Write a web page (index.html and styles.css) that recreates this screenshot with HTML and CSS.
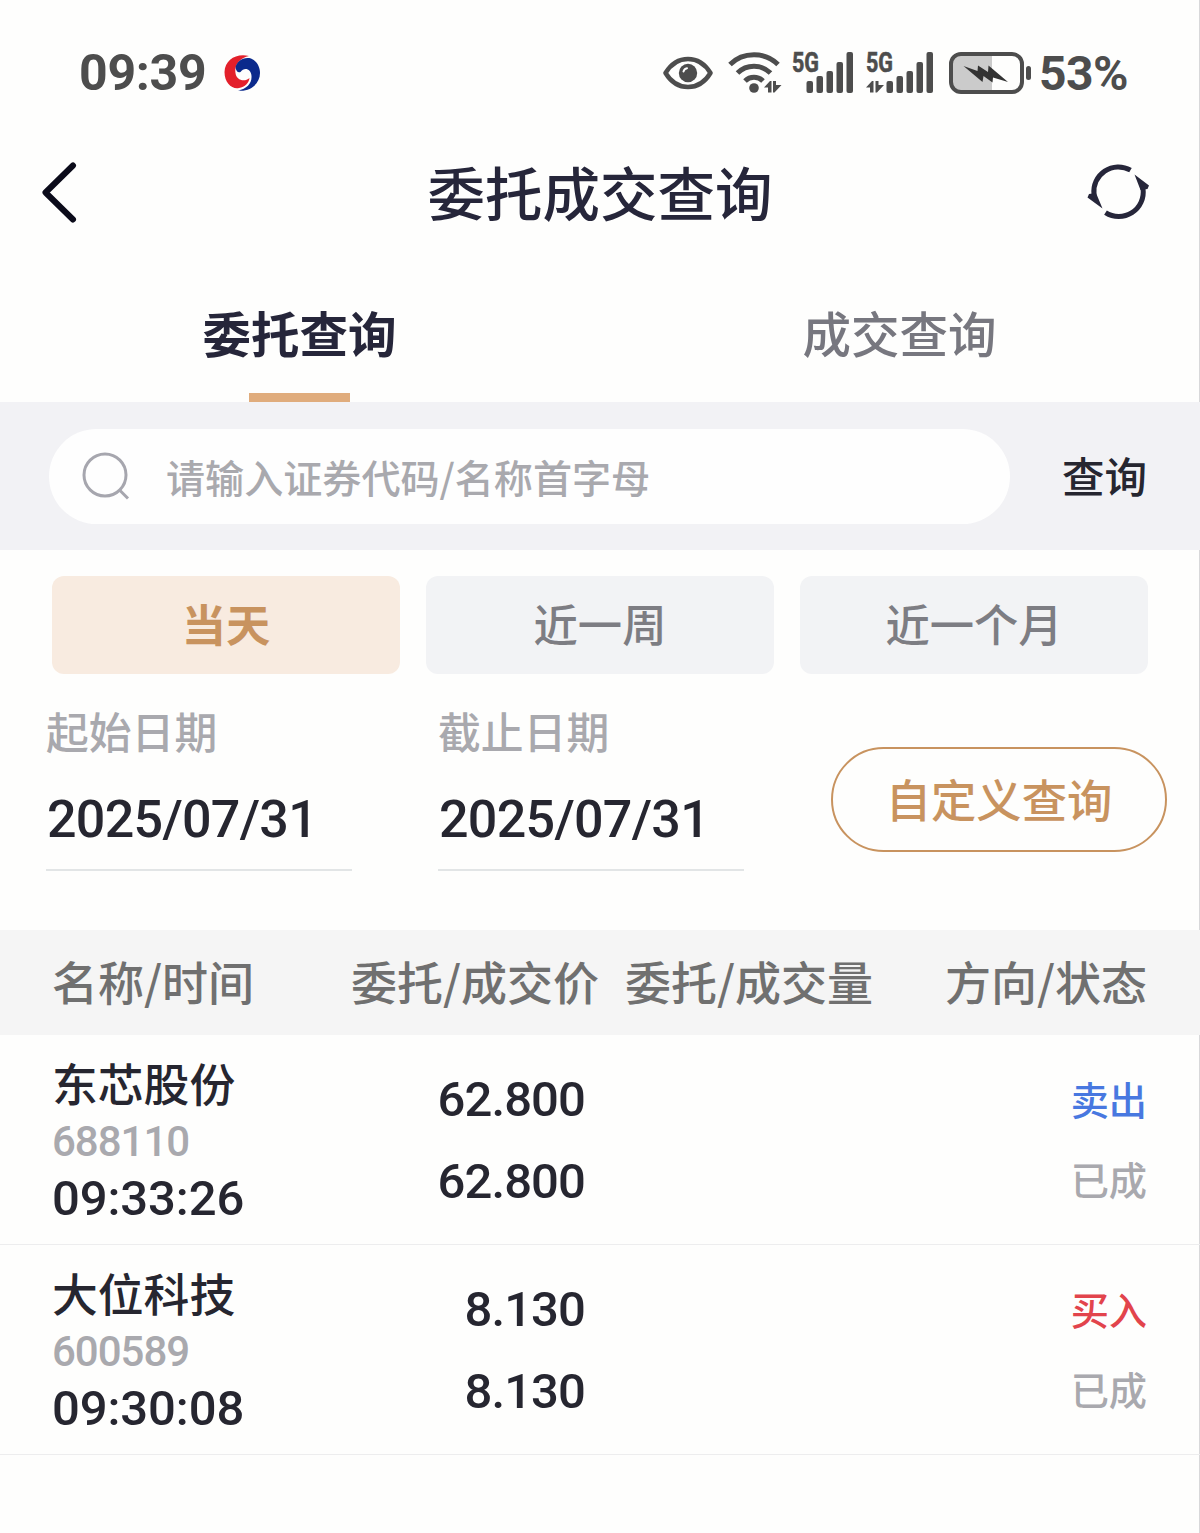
FILE: index.html
```html
<!DOCTYPE html>
<html lang="zh-CN">
<head>
    <meta charset="UTF-8">
    <meta name="viewport" content="width=device-width, initial-scale=1.0">
    <title>委托成交查询</title>
    <link rel="stylesheet" href="styles.css">
</head>
<body>
    <div class="status-bar">
        <span class="clock">09:39</span>
        <svg class="app-logo" width="38" height="38" viewBox="0 0 38 38">
            <path d="M26 2C13-1 2 6 1.500 18 1.500 29 9 35.500 16 34c6-1 10-5 10.500-10C21 29 13 25.500 12.500 19 11 11 17 4 26 2z" fill="#e3202b"/>
            <path d="M12.500 14C13 8 20 2.500 28 4.500c6 2.500 9 8.500 9 14.500C37 29 28 38 15 36.500 24 35 29 29 28.500 22 28 14.500 21 13 17.500 18c-2.500 1-4-.5-5-4z" fill="#0b2a8c"/>
        </svg>
        <div class="status-icons">
            <svg class="icon-eye" width="50" height="34" viewBox="0 0 50 34">
                <path d="M2.500 17C8 8 16 3 25 3s17 5 22.500 14C42 26 34 31 25 31S8 26 2.500 17z" fill="none" stroke="#4d4d4d" stroke-width="4.500" stroke-linejoin="round"/>
                <circle cx="25" cy="17" r="9.200" fill="#4d4d4d"/>
                <path d="M20.500 15.500a4.500 4.500 0 0 1 3.500-3.200" fill="none" stroke="#fff" stroke-width="2" stroke-linecap="round"/>
            </svg>
            <svg class="icon-wifi" width="54" height="44" viewBox="0 0 54 44">
                <g fill="none" stroke="#4d4d4d" stroke-width="5">
                    <path d="M2 13.500C15 .5 37 .5 50 13.500"/>
                    <path d="M9.500 22c9-9 24-9 33 0"/>
                    <path d="M17 30c5-5 13-5 18 0"/>
                </g>
                <circle cx="26" cy="37" r="4.800" fill="#4d4d4d"/>
                <path d="M36 36.500l6-6.500h1.500v11.500h-3.500v-5zM45 30h3v4h5.500L46.500 41.500H45z" fill="#4d4d4d"/>
            </svg>
            <svg class="icon-signal" width="62" height="60" viewBox="0 -8 62 60">
                <text class="net" x="0" y="20.500" textLength="27" lengthAdjust="spacingAndGlyphs">5G</text>
                <g fill="#4d4d4d">
                    <rect x="14.500" y="30" width="6.500" height="12" rx="2"/>
                    <rect x="24.500" y="25" width="6.500" height="17" rx="2"/>
                    <rect x="34.500" y="20" width="6.500" height="22" rx="2"/>
                    <rect x="44.500" y="11" width="6.500" height="31" rx="2"/>
                    <rect x="54.500" y="1" width="6.500" height="41" rx="2"/>
                </g>
            </svg>
            <svg class="icon-signal-data" width="68" height="60" viewBox="0 -8 68 60">
                <text class="net" x="0" y="20.500" textLength="27" lengthAdjust="spacingAndGlyphs">5G</text>
                <path d="M0 36.500L6 30h1.500v11.500H4v-5zM9.500 30h3v4h5.500L11 41.500H9.500z" fill="#4d4d4d"/>
                <g fill="#4d4d4d">
                    <rect x="20.500" y="30" width="6.500" height="12" rx="2"/>
                    <rect x="30.500" y="25" width="6.500" height="17" rx="2"/>
                    <rect x="40.500" y="20" width="6.500" height="22" rx="2"/>
                    <rect x="50.500" y="11" width="6.500" height="31" rx="2"/>
                    <rect x="60.500" y="1" width="6.500" height="41" rx="2"/>
                </g>
            </svg>
            <svg class="icon-battery" width="84" height="44" viewBox="0 0 84 44">
                <path d="M12 4h31v36H12a9 9 0 0 1-9-9V13a9 9 0 0 1 9-9z" fill="#cbcbcb"/>
                <rect x="2" y="3" width="71" height="38" rx="10" fill="none" stroke="#4d4d4d" stroke-width="4"/>
                <path d="M14.500 15l14 5 .5-5.500 10 6.500.5-6.500L59 31l-15-4.500-.5 5-9-6.500-1 6z" fill="#333"/>
                <rect x="77" y="15" width="5" height="14" rx="2.500" fill="#4d4d4d"/>
            </svg>
        </div>
        <span class="battery-level">53%</span>
    </div>

    <header class="nav">
        <svg class="back" width="36" height="62" viewBox="0 0 36 62">
            <path d="M32 3.500L4.500 30.500 32 57.500" fill="none" stroke="#0b0b1a" stroke-width="6" stroke-linecap="round" stroke-linejoin="round"/>
        </svg>
        <h1 class="title">委托成交查询</h1>
        <svg class="refresh" width="64" height="58" viewBox="0 0 64 58">
            <g fill="none" stroke="#26263a" stroke-width="5">
                <path d="M44.500 6.200A24.500 24.500 0 0 0 8 30.500V33"/>
                <path d="M19.500 48.600A24.500 24.500 0 0 0 57 24.500V22"/>
            </g>
            <path d="M48.500 10.500L63 21.500l-1.500 3.500-7 1zM16.500 44.500L1.500 33.500 3 30l7-1z" fill="#26263a"/>
        </svg>
    </header>

    <nav class="tabs">
        <div class="tab active">委托查询</div>
        <div class="tab">成交查询</div>
    </nav>

    <div class="search-bar">
        <div class="search-box">
            <svg width="48" height="48" viewBox="0 0 48 48">
                <g fill="none" stroke="#a6a6ae" stroke-width="3">
                    <circle cx="23" cy="23" r="21"/>
                    <path d="M37.500 38l8.500 8.500"/>
                </g>
            </svg>
            <span class="placeholder">请输入证券代码/名称首字母</span>
        </div>
        <div class="search-btn">查询</div>
    </div>

    <div class="ranges">
        <div class="range active">当天</div>
        <div class="range">近一周</div>
        <div class="range">近一个月</div>
    </div>

    <div class="dates">
        <div class="date">
            <p class="date-label">起始日期</p>
            <p class="date-value">2025/07/31</p>
        </div>
        <div class="date">
            <p class="date-label">截止日期</p>
            <p class="date-value">2025/07/31</p>
        </div>
        <div class="custom-btn">自定义查询</div>
    </div>

    <div class="table-head">
        <span>名称/时间</span>
        <span class="right">委托/成交价</span>
        <span class="right">委托/成交量</span>
        <span class="right">方向/状态</span>
    </div>

    <div class="order">
        <div class="stock">
            <p class="name">东芯股份</p>
            <p class="code">688110</p>
            <p class="time">09:33:26</p>
        </div>
        <div class="price">
            <p>62.800</p>
            <p>62.800</p>
        </div>
        <div class="volume"></div>
        <div class="state">
            <p class="sell">卖出</p>
            <p>已成</p>
        </div>
    </div>
    <div class="order">
        <div class="stock">
            <p class="name">大位科技</p>
            <p class="code">600589</p>
            <p class="time">09:30:08</p>
        </div>
        <div class="price">
            <p>8.130</p>
            <p>8.130</p>
        </div>
        <div class="volume"></div>
        <div class="state">
            <p class="buy">买入</p>
            <p>已成</p>
        </div>
    </div>
</body>
</html>
```
FILE: styles.css
```css
:root{
    --text: #26263a;
    --text-dark: #262630;
    --grey: #a9a9ae;
    --gold: #c8935f;
    --status: #4d4d4d;
}

*{
    box-sizing: border-box;
    margin: 0;
    padding: 0;
}

body{
    min-height: 1533px;
    background-color: #fefefd;
    box-shadow: inset -1px 0 #d8d8da;
    color: var(--text-dark);
    font-family: 'Noto Sans CJK SC', sans-serif;
    font-weight: 500;
    white-space: nowrap;
    overflow-x: hidden;
}

svg{
    display: block;
    flex: none;
}

/* status bar */
.status-bar{
    height: 146px;
    padding: 0 72px 0 79px;
    display: flex;
    align-items: center;
    color: var(--status);
    font-family: Roboto, sans-serif;
    font-weight: 700;
}

.clock{
    width: 144px;
    font-size: 50px;
    letter-spacing: -0.3px;
}

.status-icons{
    margin-left: auto;
    display: flex;
    align-items: center;
}

.icon-wifi{
    margin-left: 15px;
}

.icon-signal{
    margin-left: 10px;
}

.icon-signal-data{
    margin-left: 12px;
}

.icon-battery{
    margin-left: 15px;
}

.net{
    font-size: 27px;
    font-weight: 700;
    fill: var(--status);
    stroke: var(--status);
    stroke-width: 0.6px;
}

.battery-level{
    width: 89px;
    margin-left: 6px;
    font-size: 48px;
    letter-spacing: -0.5px;
}

/* title */
.nav{
    height: 94px;
    padding: 0 50px 0 41px;
    display: flex;
    align-items: center;
    justify-content: space-between;
}

.title{
    padding: 0 0 4px 37px;
    font-size: 57.500px;
    line-height: 90px;
    font-weight: 500;
    color: var(--text);
}

/* tabs */
.tabs{
    height: 162px;
    display: flex;
}

.tab{
    flex: 1;
    padding: 62px 1px 0 0;
    display: flex;
    flex-direction: column;
    align-items: center;
    justify-content: space-between;
    font-size: 48.500px;
    line-height: 60px;
    color: #77777f;
}

.tab.active{
    color: var(--text);
    font-weight: 700;
}

.tab.active::after{
    content: '';
    width: 101px;
    height: 9px;
    background-color: #e0ac7c;
}

/* search */
.search-bar{
    height: 148px;
    padding-left: 49px;
    display: flex;
    align-items: center;
    background-color: #f2f2f5;
}

.search-box{
    width: 961px;
    height: 95px;
    padding-left: 33px;
    border-radius: 48px;
    display: flex;
    align-items: center;
    background-color: #fefefe;
}

.placeholder{
    margin-left: 36px;
    font-size: 39.100px;
    line-height: 60px;
    color: var(--grey);
}

.search-btn{
    margin-left: 52px;
    padding-bottom: 2px;
    font-size: 42.500px;
    line-height: 60px;
}

/* quick ranges */
.ranges{
    padding: 26px 52px 0;
    display: grid;
    grid-template-columns: repeat(3, 1fr);
    gap: 26px;
}

.range{
    height: 98px;
    border-radius: 12px;
    background-color: #f2f3f5;
    font-size: 44.300px;
    line-height: 95px;
    text-align: center;
    color: #7d7d83;
}

.range.active{
    background-color: #f8ebe0;
    color: var(--gold);
    font-weight: 700;
}

/* date pickers */
.dates{
    height: 256px;
    padding: 28px 33px 0 46px;
    display: flex;
    align-items: flex-start;
}

.date{
    width: 306px;
    height: 169px;
    margin-right: 86px;
    border-bottom: 2px solid #e2e5e6;
}

.date-label{
    font-size: 42.800px;
    line-height: 56px;
    color: var(--grey);
}

.date-value{
    margin-top: 32px;
    padding-left: 1px;
    font-family: Roboto, sans-serif;
    font-size: 52px;
    line-height: 60px;
    letter-spacing: -0.7px;
}

.custom-btn{
    width: 336px;
    height: 105px;
    margin: 45px 0 0 1px;
    border: 2px solid var(--gold);
    border-radius: 53px;
    font-size: 45.300px;
    line-height: 99px;
    text-align: center;
    color: var(--gold);
}

/* orders */
.table-head, .order{
    padding: 0 53px 0 52px;
    display: grid;
    grid-template-columns: 261px 286px 274px 274px;
}

.table-head{
    height: 105px;
    background-color: #f5f5f5;
    font-size: 46px;
    line-height: 101px;
    color: #707070;
}

.right{
    text-align: right;
}

.order{
    height: 210px;
    border-bottom: 1px solid #ededee;
}

.stock{
    padding-top: 19px;
    line-height: 57px;
}

.name{
    margin-bottom: 2px;
    font-size: 45.800px;
}

.code{
    font-family: Roboto, sans-serif;
    font-size: 42px;
    letter-spacing: -1px;
    color: var(--grey);
}

.time{
    font-family: Roboto, sans-serif;
    font-size: 49px;
    letter-spacing: -0.1px;
}

.price{
    padding: 24px 14px 0 0;
    font-family: Roboto, sans-serif;
    font-size: 49px;
    line-height: 82px;
    letter-spacing: -0.9px;
    text-align: right;
}

.state{
    padding-top: 24px;
    font-size: 38.200px;
    line-height: 80px;
    text-align: right;
    color: var(--grey);
}

.sell{
    color: #4878e0;
}

.buy{
    color: #e2444c;
}
```
